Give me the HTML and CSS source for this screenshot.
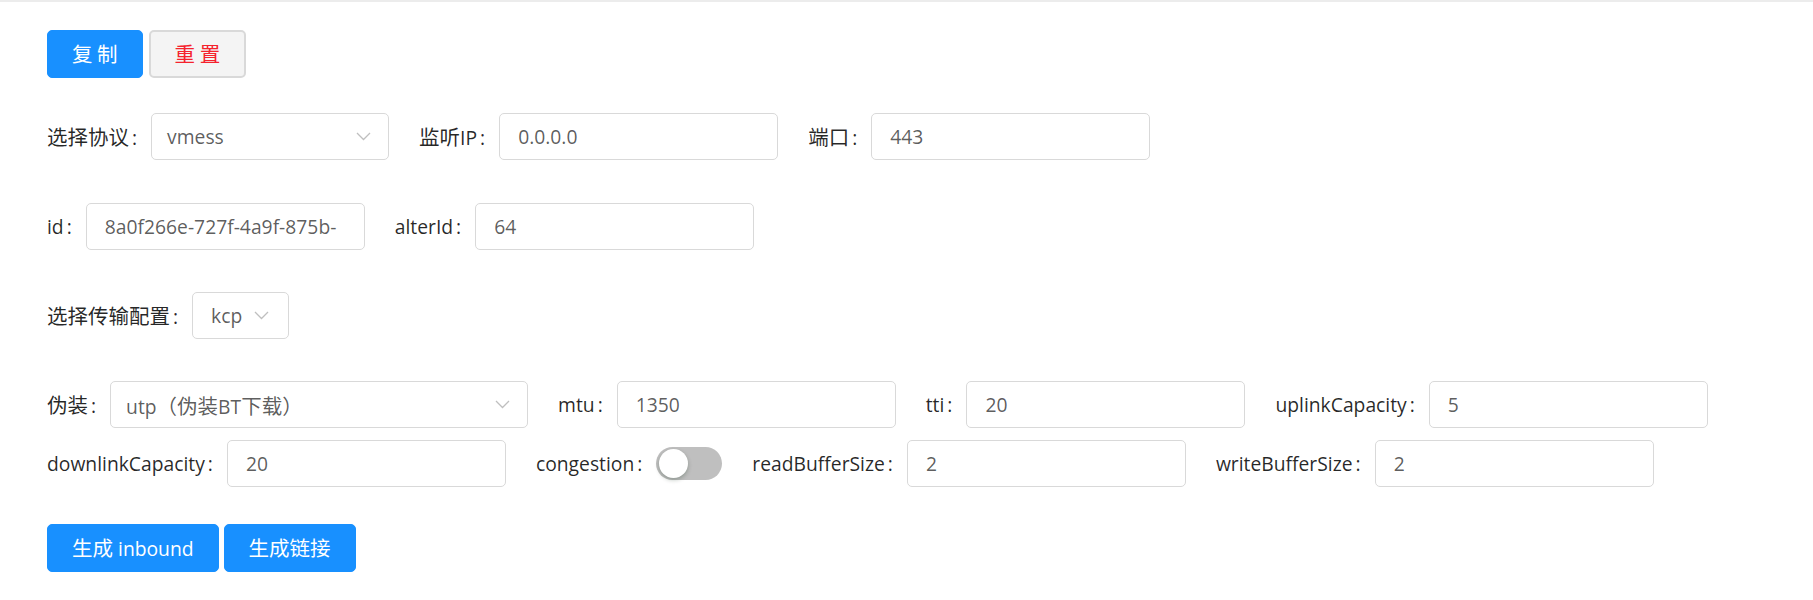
FILE: index.html
```html
<!DOCTYPE html>
<html lang="zh-CN">
<head>
<meta charset="utf-8">
<title>inbound</title>
<link rel="stylesheet" href="styles.css">
</head>
<body>
<div class="topline"></div>
<div class="page">
  <div class="toolbar">
    <button class="btn btn-primary"><span class="zh">复 制</span></button>
    <button class="btn btn-reset"><span class="zh">重 置</span></button>
  </div>

  <div class="form-row row-1">
    <div class="item">
      <span class="lbl"><span class="zh">选择协议</span></span>
      <div class="select sel-proto"><span class="sel-val">vmess</span><svg class="arrow" width="15" height="9" viewBox="0 0 15 9"><polyline points="1,1 7.5,7.5 14,1" fill="none" stroke="#bfbfbf" stroke-width="1.3"/></svg></div>
    </div>
    <div class="item">
      <span class="lbl"><span class="zh">监听</span>IP</span>
      <div class="input">0.0.0.0</div>
    </div>
    <div class="item">
      <span class="lbl"><span class="zh">端口</span></span>
      <div class="input">443</div>
    </div>
  </div>

  <div class="form-row row-2">
    <div class="item">
      <span class="lbl">id</span>
      <div class="input">8a0f266e-727f-4a9f-875b-</div>
    </div>
    <div class="item">
      <span class="lbl">alterId</span>
      <div class="input">64</div>
    </div>
  </div>

  <div class="form-row row-3">
    <div class="item">
      <span class="lbl"><span class="zh">选择传输配置</span></span>
      <div class="select sel-kcp"><span class="sel-val">kcp</span><svg class="arrow" width="15" height="9" viewBox="0 0 15 9"><polyline points="1,1 7.5,7.5 14,1" fill="none" stroke="#bfbfbf" stroke-width="1.3"/></svg></div>
    </div>
  </div>

  <div class="form-row row-4">
    <div class="item">
      <span class="lbl"><span class="zh">伪装</span></span>
      <div class="select sel-mask"><span class="sel-val">utp<span class="zh">（伪装</span>BT<span class="zh">下载）</span></span><svg class="arrow" width="15" height="9" viewBox="0 0 15 9"><polyline points="1,1 7.5,7.5 14,1" fill="none" stroke="#bfbfbf" stroke-width="1.3"/></svg></div>
    </div>
    <div class="item">
      <span class="lbl">mtu</span>
      <div class="input">1350</div>
    </div>
    <div class="item">
      <span class="lbl">tti</span>
      <div class="input">20</div>
    </div>
    <div class="item">
      <span class="lbl">uplinkCapacity</span>
      <div class="input">5</div>
    </div>
  </div>

  <div class="form-row row-5">
    <div class="item">
      <span class="lbl">downlinkCapacity</span>
      <div class="input">20</div>
    </div>
    <div class="item">
      <span class="lbl">congestion</span>
      <div class="switch"><span class="knob"></span></div>
    </div>
    <div class="item">
      <span class="lbl">readBufferSize</span>
      <div class="input">2</div>
    </div>
    <div class="item">
      <span class="lbl">writeBufferSize</span>
      <div class="input">2</div>
    </div>
  </div>

  <div class="actions">
    <button class="btn btn-primary"><span class="zh">生成</span> inbound</button>
    <button class="btn btn-primary"><span class="zh">生成链接</span></button>
  </div>
</div>
</body>
</html>
```
FILE: styles.css
```css
html, body {
  margin: 0;
  padding: 0;
  background: #ffffff;
}

body {
  font-family: "Open Sans", "Noto Sans CJK SC", sans-serif;
  font-size: 19.3px;
  color: rgba(0, 0, 0, 0.85);
}

.zh {
  font-family: "Noto Sans CJK SC", sans-serif;
  font-size: 20.5px;
}

.topline {
  height: 2px;
  background: #ececec;
}

.page {
  padding: 28px 47px 0;
}

.toolbar,
.actions {
  display: flex;
  gap: 6px;
}

.actions {
  gap: 5px;
  margin-top: 37px;
}

.btn {
  height: 48px;
  padding: 0 24px;
  border-radius: 5px;
  font-family: inherit;
  font-size: 19.3px;
  line-height: 1;
  cursor: pointer;
}

.btn-primary {
  background: #1890ff;
  border: 1px solid #1890ff;
  color: #ffffff;
}

.btn-reset {
  background: #f4f4f4;
  border: 2px solid #d9d9d9;
  color: #f5222d;
}

.form-row {
  display: flex;
  align-items: center;
}

.row-1 { margin-top: 35px; }
.row-2 { margin-top: 43px; }
.row-3 { margin-top: 42px; }
.row-4 { margin-top: 42px; }
.row-5 { margin-top: 12px; }

.item {
  display: flex;
  align-items: center;
  margin-right: 30px;
}

.lbl {
  white-space: nowrap;
  line-height: 1.2;
}

.lbl::after {
  content: ":";
  margin: 0 14px 0 3px;
}

.input,
.select {
  box-sizing: border-box;
  height: 47px;
  border: 1.5px solid #d9d9d9;
  border-radius: 5px;
  background: #ffffff;
  color: rgba(0, 0, 0, 0.65);
  display: flex;
  align-items: center;
  white-space: nowrap;
  overflow: hidden;
}

.input {
  width: 279px;
  padding: 0 18px;
}

.select {
  padding: 0 17px 0 15px;
  justify-content: space-between;
}

.sel-proto { width: 238px; }
.sel-kcp { width: 97px; padding-left: 18px; padding-right: 19px; }
.sel-mask { width: 418px; }

.arrow {
  flex: none;
}

.switch {
  position: relative;
  width: 66px;
  height: 33px;
  border-radius: 17px;
  background: #bfbfbf;
}

.knob {
  position: absolute;
  top: 2px;
  left: 3px;
  width: 29px;
  height: 29px;
  border-radius: 50%;
  background: #ffffff;
  box-shadow: 0 2px 4px rgba(0, 35, 11, 0.25);
}
```
